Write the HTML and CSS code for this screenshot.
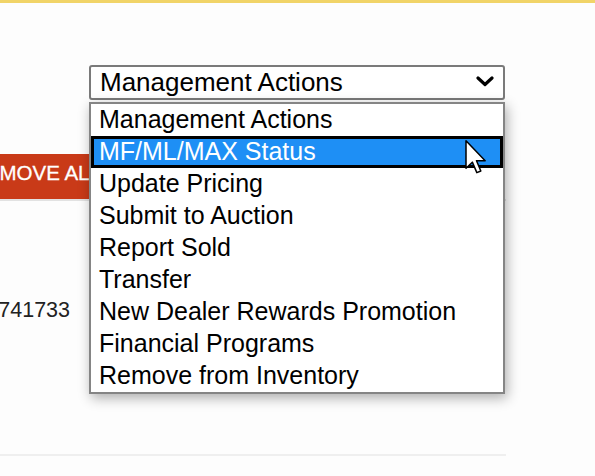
FILE: index.html
```html
<!DOCTYPE html>
<html>
<head>
<meta charset="utf-8">
<link rel="stylesheet" href="styles.css">
</head>
<body>
<div class="topbar"></div>
<div class="page">
  <div class="select-row">
    <div class="select">
      <span class="select-label">Management Actions</span>
      <svg class="chevron" width="18" height="11" viewBox="0 0 18 11"><polyline points="2,2 9,8.5 16,2" fill="none" stroke="#000" stroke-width="3.2" stroke-linecap="round" stroke-linejoin="round"/></svg>
    </div>
  </div>
  <div class="grid">
    <div class="row row-btn"><button class="btn-red">REMOVE ALL</button></div>
    <div class="row row-num"><span class="num">2741733</span></div>
  </div>
  <div class="footer-line"></div>

  <ul class="listbox">
    <li class="opt">Management Actions</li>
    <li class="opt selected">MF/ML/MAX Status</li>
    <li class="opt">Update Pricing</li>
    <li class="opt">Submit to Auction</li>
    <li class="opt">Report Sold</li>
    <li class="opt">Transfer</li>
    <li class="opt">New Dealer Rewards Promotion</li>
    <li class="opt">Financial Programs</li>
    <li class="opt">Remove from Inventory</li>
  </ul>

  <svg class="cursor" width="22" height="35" viewBox="0 0 13 21">
    <path d="M0.5,0.5 L0.5,17 L4.3,13.3 L7,19.6 L9.4,18.6 L6.8,12.4 L12,12.4 Z" fill="#fff" stroke="#000" stroke-width="0.9" stroke-linejoin="round"/>
  </svg>
</div>
</body>
</html>
```
FILE: styles.css
```css
html, body {
  margin: 0;
  padding: 0;
}
body {
  background: #fdfdfd;
  font-family: "Liberation Sans", Arial, sans-serif;
  color: #000;
  width: 595px;
  height: 476px;
  overflow: hidden;
}
.topbar {
  height: 3px;
  background: #f1d468;
}
.page {
  position: relative;
  padding-top: 62px;
}
.select-row {
  display: flex;
  padding-left: 89px;
}
.select {
  box-sizing: border-box;
  width: 416px;
  height: 35px;
  border: 2px solid #7a7a7a;
  border-radius: 3px;
  background: #fff;
  display: flex;
  align-items: center;
  justify-content: space-between;
  padding: 0 9px 0 9px;
}
.select-label {
  font-size: 26px;
  line-height: 28px;
  position: relative;
  top: -1px;
}
.chevron {
  display: block;
  margin-top: -3px;
}
.grid {
  margin-top: 54px;
  width: 506px;
}
.row-btn {
  border-bottom: 2px solid #e2e2e2;
  overflow: hidden;
}
.btn-red {
  display: block;
  margin-left: -41px;
  width: 220px;
  height: 45px;
  border: 0;
  background: #c93a18;
  color: #fff;
  font-family: "Liberation Sans", Arial, sans-serif;
  font-size: 20.5px;
  line-height: 24px;
  text-align: left;
  padding: 0 0 8px 12px;
  margin-top: 0;
  -webkit-text-stroke: 0.3px #fff;
}
.row-num {
  padding-top: 97px;
  height: 24px;
  overflow: hidden;
  display: flex;
  justify-content: flex-end;
  width: 70px;
}
.num {
  font-size: 21.5px;
  line-height: 24px;
  color: #222;
  white-space: nowrap;
}
.footer-line {
  margin-top: 132px;
  width: 506px;
  height: 2px;
  background: #efefef;
}
.listbox {
  position: absolute;
  top: 99px;
  left: 89px;
  box-sizing: border-box;
  width: 416px;
  margin: 0;
  padding: 0;
  list-style: none;
  background: #fff;
  border: 2px solid #858585;
  box-shadow: 2px 4px 12px rgba(0, 0, 0, 0.32);
}
.opt {
  box-sizing: border-box;
  height: 32px;
  font-size: 25px;
  line-height: 30px;
  padding-left: 8px;
  white-space: nowrap;
}
.opt.selected {
  background: #1e8ff5;
  color: #fff;
  border: 3px solid #000;
  padding-left: 5px;
  line-height: 25px;
}
.cursor {
  position: absolute;
  top: 137px;
  left: 465px;
}
```
